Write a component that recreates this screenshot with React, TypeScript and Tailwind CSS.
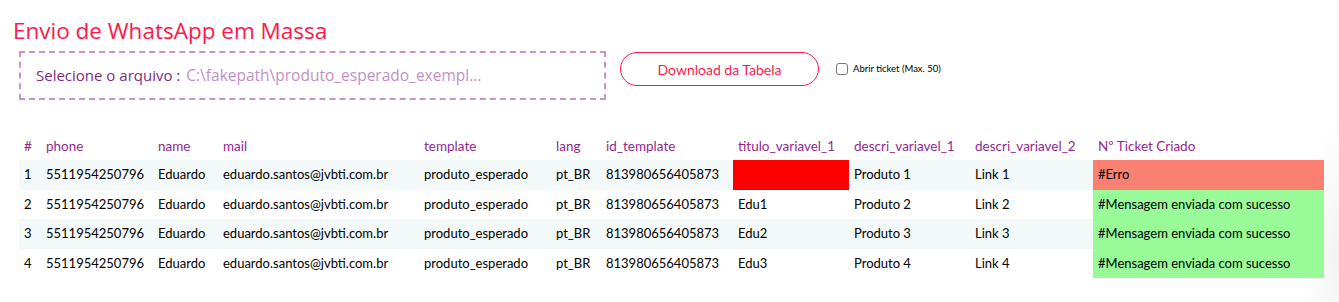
const rows = [
  { n: 1, titulo: "", d1: "Produto 1", d2: "Link 1", status: "#Erro", ok: false },
  { n: 2, titulo: "Edu1", d1: "Produto 2", d2: "Link 2", status: "#Mensagem enviada com sucesso", ok: true },
  { n: 3, titulo: "Edu2", d1: "Produto 3", d2: "Link 3", status: "#Mensagem enviada com sucesso", ok: true },
  { n: 4, titulo: "Edu3", d1: "Produto 4", d2: "Link 4", status: "#Mensagem enviada com sucesso", ok: true },
]

const headers = [
  { label: "#", w: "w-[22px]" },
  { label: "phone", w: "w-[112px]" },
  { label: "name", w: "w-[65px]" },
  { label: "mail", w: "w-[201px]" },
  { label: "template", w: "w-[132px]" },
  { label: "lang", w: "w-[50px]" },
  { label: "id_template", w: "w-[132px]" },
  { label: "titulo_variavel_1", w: "w-[116px]" },
  { label: "descri_variavel_1", w: "w-[121px]" },
  { label: "descri_variavel_2", w: "w-[123px]" },
  { label: "Nº Ticket Criado", w: "w-[231px]" },
]

const App = () => {
  return (
    <div className="w-[1339px] h-[302px] overflow-hidden bg-white bg-[radial-gradient(ellipse_40px_140px_at_100%_85%,rgba(0,0,0,0.05),rgba(0,0,0,0))] font-['Lato',sans-serif] text-black">
      <h1 className="pl-[13px] pt-[17px] text-[22.5px] leading-[28px] text-[#ff1849] font-['Open_Sans',sans-serif]">
        Envio de WhatsApp em Massa
      </h1>

      <div className="flex items-start pl-[19px] mt-[6px]">
        <div className="w-[587px] h-[49px] border-2 border-dashed border-[#c993c9] flex items-center pl-[15px] font-['Open_Sans',sans-serif]">
          <span className="text-[15px] font-medium text-[#7d2c80]">Selecione o arquivo :</span>
          <span className="ml-[6px] text-[15.5px] font-medium text-[#c48fc4]">C:\fakepath\produto_esperado_exempl...</span>
        </div>

        <button className="ml-[14px] mt-[1px] w-[199px] h-[34px] rounded-full border border-[#ff1849] text-[14px] text-[#ff1849] bg-white">
          Download da Tabela
        </button>

        <label className="ml-[17px] mt-[11px] flex items-center gap-[5px] text-[9.5px] text-black">
          <span className="w-[12px] h-[12px] rounded-[3px] border border-[#767676] bg-white" />
          Abrir ticket (Max. 50)
        </label>
      </div>

      <table className="ml-[19px] mt-[32px] table-fixed border-collapse w-[1305px] text-[13px]">
        <thead>
          <tr className="h-[28px] text-[13.5px]">
            {headers.map((h) => (
              <th key={h.label} className={`${h.w} px-[5px] text-left font-normal text-[#93288f]`}>
                {h.label}
              </th>
            ))}
          </tr>
        </thead>
        <tbody>
          {rows.map((r) => (
            <tr key={r.n} className={`h-[29.5px] ${r.n % 2 === 1 ? "bg-[#f3f8f8]" : "bg-white"}`}>
              <td className="px-[5px]">{r.n}</td>
              <td className="px-[5px]">5511954250796</td>
              <td className="px-[5px]">Eduardo</td>
              <td className="px-[5px]">eduardo.santos@jvbti.com.br</td>
              <td className="px-[5px]">produto_esperado</td>
              <td className="px-[5px]">pt_BR</td>
              <td className="px-[5px]">813980656405873</td>
              <td className={`px-[5px] ${r.titulo === "" ? "bg-[#ff0000]" : ""}`}>{r.titulo}</td>
              <td className="px-[5px]">{r.d1}</td>
              <td className="px-[5px]">{r.d2}</td>
              <td className={`px-[5px] ${r.ok ? "bg-[#98fb98]" : "bg-[#fa8072]"}`}>{r.status}</td>
            </tr>
          ))}
        </tbody>
      </table>
    </div>
  )
}

export default App
